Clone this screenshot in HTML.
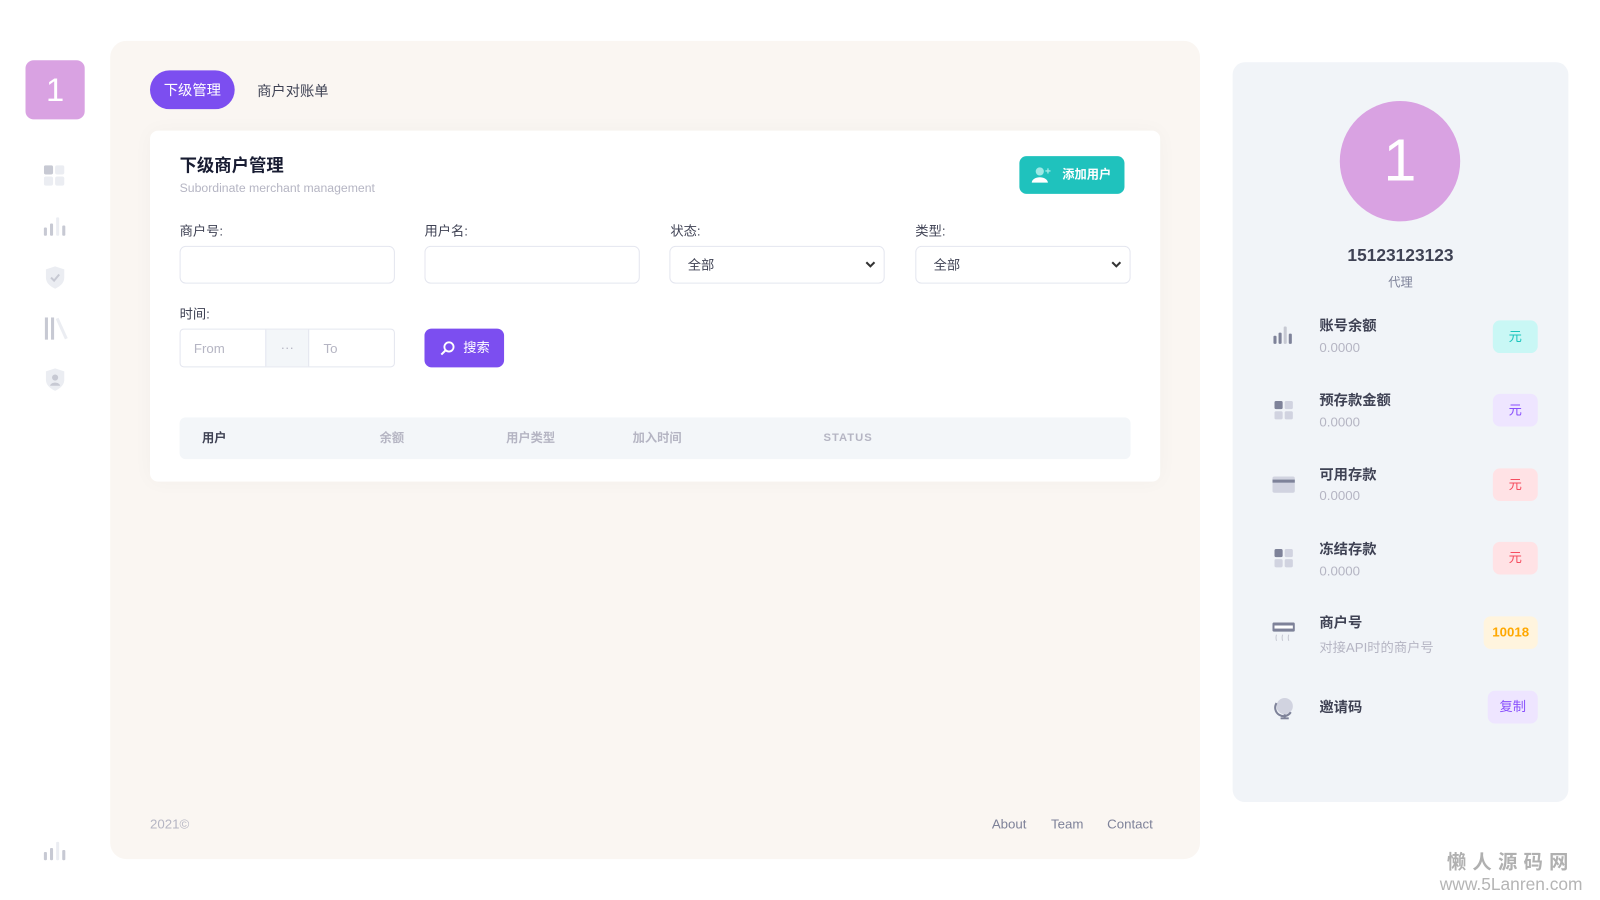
<!DOCTYPE html>
<html><head><meta charset="utf-8">
<style>
*{box-sizing:border-box;margin:0;padding:0}
body{width:1600px;height:900px;background:#fff;font-family:"Liberation Sans","Noto Sans CJK SC",sans-serif;overflow:hidden;color:#181c32}
#w{position:absolute;left:0;top:0;width:1568px;height:882px;transform:scale(1.0204);transform-origin:0 0}
.abs{position:absolute}
.logo{left:25px;top:59px;width:58px;height:58px;background:#d9a2e2;border-radius:8px;color:#fff;font-size:32px;text-align:center;line-height:58px}
.main{left:108px;top:40px;width:1068px;height:802px;background:#faf6f2;border-radius:16px}
.tab{left:147px;top:69px;width:83px;height:38px;background:#7c4ef0;border-radius:19px;color:#fff;font-size:14px;text-align:center;line-height:38px}
.tab2{left:252px;top:79px;font-size:14px;color:#3f4254}
.card{left:147px;top:128px;width:990px;height:344px;background:#fff;border-radius:8px;box-shadow:0 0 20px rgba(0,0,0,.03)}
.lbl{font-size:13px;color:#3f4254}
.inp{height:37px;width:211px;border:1px solid #e4e6ef;border-radius:6px;background:#fff;font-size:13px;color:#3f4254;padding-left:17px;line-height:35px}
.right{left:1208px;top:61px;width:329px;height:725px;background:#f1f4f8;border-radius:12px}
.it{font-size:14px;font-weight:bold;color:#3f4254}
.sub{font-size:13px;color:#b5b5c3}
.badge{width:44px;height:32px;border-radius:7px;font-size:13px;text-align:center;line-height:32px}
</style></head><body><div id="w">
<div class="abs logo">1</div>
<svg class="abs" style="left:43px;top:162px" width="21" height="20"><rect x="0" y="0" width="9" height="9" rx="2" fill="#c7c9d3"/><rect x="11" y="0" width="9" height="9" rx="2" fill="#ebedf2"/><rect x="0" y="11" width="9" height="9" rx="2" fill="#ebedf2"/><rect x="11" y="11" width="9" height="9" rx="2" fill="#ebedf2"/></svg>
<svg class="abs" style="left:42px;top:212px" width="24" height="20"><rect x="1" y="11" width="3" height="8" rx="1" fill="#c7c9d3"/><rect x="7" y="7" width="3" height="12" rx="1" fill="#c7c9d3"/><rect x="13" y="1" width="3" height="18" rx="1" fill="#ebedf2"/><rect x="19" y="9" width="3" height="10" rx="1" fill="#c7c9d3"/></svg>
<svg class="abs" style="left:43px;top:260px" width="22" height="24"><path d="M11 1 L20 4 V12 C20 18 15 21 11 23 C7 21 2 18 2 12 V4 Z" fill="#ebedf2"/><path d="M7 12 L10 15 L15 9" stroke="#c7c9d3" stroke-width="2" fill="none"/></svg>
<svg class="abs" style="left:43px;top:311px" width="24" height="22"><rect x="1" y="0" width="3" height="22" fill="#c7c9d3"/><rect x="7" y="0" width="3" height="22" fill="#c7c9d3"/><path d="M13 1 L22 21" stroke="#ebedf2" stroke-width="3"/></svg>
<svg class="abs" style="left:43px;top:360px" width="22" height="24"><path d="M11 1 L20 4 V12 C20 18 15 21 11 23 C7 21 2 18 2 12 V4 Z" fill="#ebedf2"/><circle cx="11" cy="10" r="3" fill="#c7c9d3"/><path d="M6 18 C7 14 15 14 16 18" fill="#c7c9d3"/></svg>
<svg class="abs" style="left:42px;top:824px" width="24" height="20"><rect x="1" y="11" width="3" height="8" rx="1" fill="#c7c9d3"/><rect x="7" y="7" width="3" height="12" rx="1" fill="#c7c9d3"/><rect x="13" y="1" width="3" height="18" rx="1" fill="#ebedf2"/><rect x="19" y="9" width="3" height="10" rx="1" fill="#c7c9d3"/></svg>

<div class="abs main"></div>
<div class="abs tab">下级管理</div>
<div class="abs tab2">商户对账单</div>
<div class="abs card"></div>
<div class="abs" style="left:176px;top:148px;font-size:17px;font-weight:bold;color:#181c32">下级商户管理</div>
<div class="abs" style="left:176px;top:177px;font-size:12px;color:#b5b5c3">Subordinate merchant management</div>
<div class="abs" style="left:999px;top:153px;width:103px;height:37px;background:#1fc2bd;border-radius:7px;color:#fff;font-size:12px;font-weight:bold;line-height:37px;padding-left:42px">添加用户
<svg class="abs" style="left:12px;top:10px" width="20" height="17"><circle cx="8" cy="5" r="4" fill="#9ee9e5"/><path d="M0 16 C1 9 15 9 16 16 Z" fill="#fff"/><path d="M16 2 V7 M13.5 4.5 H18.5" stroke="#9ee9e5" stroke-width="1.3"/></svg></div>

<div class="abs lbl" style="left:176px;top:216px">商户号:</div>
<div class="abs lbl" style="left:416px;top:216px">用户名:</div>
<div class="abs lbl" style="left:657px;top:216px">状态:</div>
<div class="abs lbl" style="left:897px;top:216px">类型:</div>
<div class="abs inp" style="left:176px;top:241px"></div>
<div class="abs inp" style="left:416px;top:241px"></div>
<div class="abs inp" style="left:656px;top:241px">全部<svg class="abs" style="right:8px;top:14px" width="10" height="8"><path d="M1 1 L5 5 L9 1" stroke="#333" stroke-width="2" fill="none"/></svg></div>
<div class="abs inp" style="left:897px;top:241px">全部<svg class="abs" style="right:8px;top:14px" width="10" height="8"><path d="M1 1 L5 5 L9 1" stroke="#333" stroke-width="2" fill="none"/></svg></div>
<div class="abs lbl" style="left:176px;top:297px">时间:</div>
<div class="abs" style="left:176px;top:322px;width:211px;height:38px;border:1px solid #e4e6ef;border-radius:4px;background:#fff;font-size:13px;color:#b5b5c3">
<span class="abs" style="left:13px;top:11px">From</span>
<div class="abs" style="left:83px;top:0;width:43px;height:36px;background:#f3f6f9;border-left:1px solid #e4e6ef;border-right:1px solid #e4e6ef;text-align:center;line-height:36px">···</div>
<span class="abs" style="left:140px;top:11px">To</span></div>
<div class="abs" style="left:416px;top:322px;width:78px;height:38px;background:#7c4ef0;border-radius:7px;color:#fff;font-size:13px;line-height:38px;padding-left:38px">搜索
<svg class="abs" style="left:15px;top:12px" width="15" height="15"><circle cx="9" cy="6" r="4.5" stroke="#fff" stroke-width="1.8" fill="none"/><path d="M6 9 L1.5 13.5" stroke="#fff" stroke-width="2"/></svg></div>
<div class="abs" style="left:176px;top:409px;width:932px;height:41px;background:#f3f6f9;border-radius:6px;font-size:12px;color:#b5b5c3;font-weight:bold;line-height:41px">
<span class="abs" style="left:22px;top:0;color:#3f4254">用户</span>
<span class="abs" style="left:196px;top:0">余额</span>
<span class="abs" style="left:320px;top:0">用户类型</span>
<span class="abs" style="left:444px;top:0">加入时间</span>
<span class="abs" style="left:631px;top:0;font-size:11px;letter-spacing:1px">STATUS</span></div>
<div class="abs" style="left:147px;top:800px;font-size:13px;color:#b5b5c3">2021©</div>
<div class="abs" style="left:972px;top:800px;font-size:13px;color:#7e8299">About</div>
<div class="abs" style="left:1030px;top:800px;font-size:13px;color:#7e8299">Team</div>
<div class="abs" style="left:1085px;top:800px;font-size:13px;color:#7e8299">Contact</div>

<div class="abs right"></div>
<div class="abs" style="left:1313px;top:99px;width:118px;height:118px;border-radius:50%;background:#d9a2e2;color:#fff;font-size:58px;text-align:center;line-height:118px">1</div>
<div class="abs" style="left:1208px;top:241px;width:329px;text-align:center;font-size:17px;font-weight:bold;color:#3f4254">15123123123</div>
<div class="abs" style="left:1208px;top:268px;width:329px;text-align:center;font-size:12px;color:#7e8299">代理</div>

<div class="abs it" style="left:1293px;top:309px">账号余额</div><div class="abs sub" style="left:1293px;top:333px">0.0000</div>
<div class="abs badge" style="left:1463px;top:314px;background:#c9f7f5;color:#1bc5bd">元</div>
<div class="abs it" style="left:1293px;top:382px">预存款金额</div><div class="abs sub" style="left:1293px;top:406px">0.0000</div>
<div class="abs badge" style="left:1463px;top:386px;background:#eee5ff;color:#8950fc">元</div>
<div class="abs it" style="left:1293px;top:455px">可用存款</div><div class="abs sub" style="left:1293px;top:478px">0.0000</div>
<div class="abs badge" style="left:1463px;top:459px;background:#ffe2e5;color:#f64e60">元</div>
<div class="abs it" style="left:1293px;top:528px">冻结存款</div><div class="abs sub" style="left:1293px;top:552px">0.0000</div>
<div class="abs badge" style="left:1463px;top:531px;background:#ffe2e5;color:#f64e60">元</div>
<div class="abs it" style="left:1293px;top:600px">商户号</div><div class="abs sub" style="left:1293px;top:624px">对接API时的商户号</div>
<div class="abs badge" style="left:1454px;top:604px;width:53px;background:#fff4de;color:#ffa800;font-weight:bold">10018</div>
<div class="abs it" style="left:1293px;top:683px">邀请码</div>
<div class="abs badge" style="left:1458px;top:677px;width:49px;background:#eee5ff;color:#8950fc">复制</div>

<svg class="abs" style="left:1247px;top:320px" width="22" height="18"><rect x="1" y="9" width="3" height="8" rx="1" fill="#7e8299"/><rect x="6" y="6" width="3" height="11" rx="1" fill="#7e8299"/><rect x="11" y="0" width="3" height="17" rx="1" fill="#c7c9d3"/><rect x="16" y="7" width="3" height="10" rx="1" fill="#7e8299"/></svg>
<svg class="abs" style="left:1249px;top:393px" width="19" height="19"><rect x="0" y="0" width="8" height="8" rx="1.5" fill="#7e8299"/><rect x="10" y="0" width="8" height="8" rx="1.5" fill="#d1d3e0"/><rect x="0" y="10" width="8" height="8" rx="1.5" fill="#d1d3e0"/><rect x="10" y="10" width="8" height="8" rx="1.5" fill="#d1d3e0"/></svg>
<svg class="abs" style="left:1247px;top:467px" width="22" height="16"><rect x="0" y="0" width="22" height="16" rx="2" fill="#d1d3e0"/><rect x="0" y="3" width="22" height="3" fill="#7e8299"/></svg>
<svg class="abs" style="left:1249px;top:538px" width="19" height="19"><rect x="0" y="0" width="8" height="8" rx="1.5" fill="#7e8299"/><rect x="10" y="0" width="8" height="8" rx="1.5" fill="#d1d3e0"/><rect x="0" y="10" width="8" height="8" rx="1.5" fill="#d1d3e0"/><rect x="10" y="10" width="8" height="8" rx="1.5" fill="#d1d3e0"/></svg>
<svg class="abs" style="left:1247px;top:610px" width="22" height="20"><rect x="0" y="0" width="22" height="9" rx="1.5" fill="#7e8299"/><rect x="2" y="3" width="18" height="3" fill="#fff"/><path d="M4 12 Q3 15 4 18 M10 12 Q9 15 10 18 M16 12 Q15 15 16 18" stroke="#c7c9d3" fill="none"/></svg>
<svg class="abs" style="left:1248px;top:683px" width="22" height="22"><circle cx="11" cy="9" r="8" fill="#d1d3e0"/><path d="M3 6 A8 8 0 0 0 17 15" stroke="#7e8299" stroke-width="2" fill="none"/><path d="M11 17 V20 M7 21 H15" stroke="#7e8299" stroke-width="2"/></svg>

<div class="abs" style="left:1418px;top:830px;font-size:19px;font-weight:bold;color:#b0b0b0;letter-spacing:6px">懒人源码网</div>
<div class="abs" style="left:1411px;top:857px;font-size:17px;color:#b5b5b5">www.5Lanren.com</div>
</div></body></html>
